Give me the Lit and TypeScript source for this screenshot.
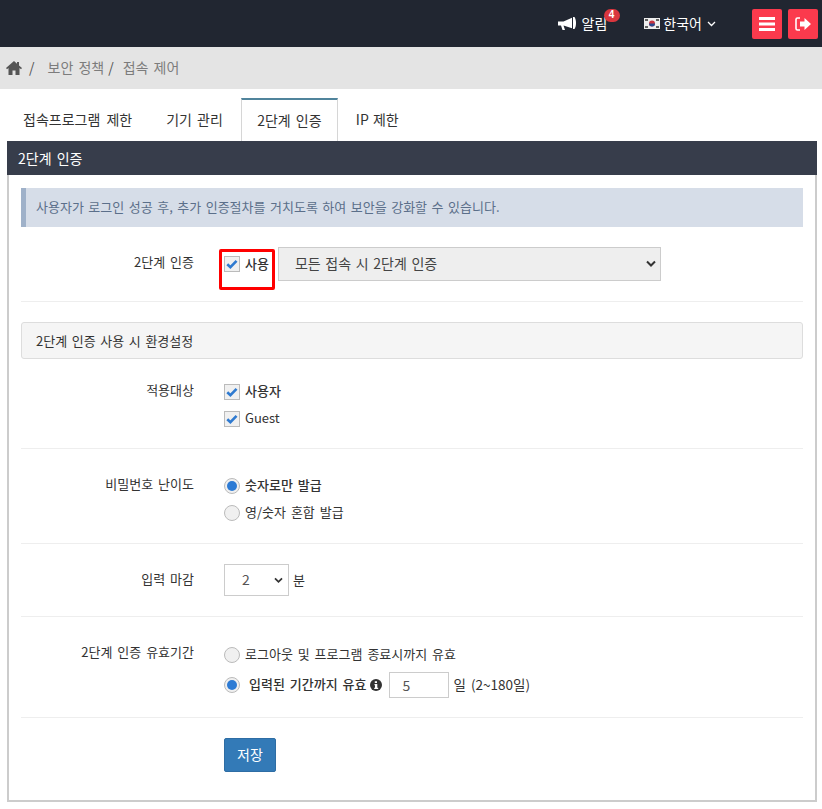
import { LitElement, html, css } from "lit";
import { customElement } from "lit/decorators.js";

const check = html`<svg class="chk" viewBox="0 0 16 16"><path d="M2.600 8.200 6.200 11.600 13.200 4.400" fill="none" stroke="#2f7ad0" stroke-width="3"/></svg>`;

@customElement("app-root")
export class AppRoot extends LitElement {
  static styles = css`
    :host { display: block; font-family: "Noto Sans CJK KR", "Noto Sans", sans-serif; font-size: 13px; word-spacing: 2px; color: #333; background: #fff; height: 809px; overflow: hidden; }
    * { box-sizing: border-box; }
    .top { height: 47px; background: #212631; display: flex; align-items: center; justify-content: flex-end; color: #fff; font-size: 14px; }
    .alarm { display: flex; align-items: center; position: relative; margin-right: 37px; }
    .alarm svg { margin-right: 6px; }
    .label-up { padding-bottom: 2px; }
    .badge { position: absolute; left: 46px; top: -4px; background: #d9363e; color: #fff; font: bold 10px/1 "Liberation Sans", sans-serif; width: 16px; height: 13px; border-radius: 7px; text-align: center; padding-top: 1px; }
    .lang { display: flex; align-items: center; gap: 3px; margin-right: 36px; }
    .flag { display: block; }
    .caret { margin-left: 2px; }
    .ibtn { width: 30px; height: 30px; background: #fb3a4d; border-radius: 2px; display: flex; align-items: center; justify-content: center; margin-right: 6px; }
    .ibtn:last-child { margin-right: 4px; }
    .crumb { height: 42px; background: #e4e4e4; display: flex; align-items: center; padding: 0 0 2px 6px; color: #7c7c7c; font-size: 14px; }
    .crumb svg { margin-top: 2px; }
    .crumb .sl { margin: 0 13px 0 7px; color: #555; }
    .crumb .sl2 { margin: 0 9px 0 4px; color: #555; }
    .tabs { display: flex; padding: 9px 0 0 7px; height: 52px; }
    .tab { height: 43px; padding: 0 17px 2px; font-size: 14px; display: flex; align-items: center; color: #333; }
    .tab.first { padding: 0 17px 2px 16px; word-spacing: 3px; }
    .tab.last { padding-left: 18px; word-spacing: 1px; }
    .tab.on { border: 1px solid #d6d6d6; border-top: 2px solid #50849c; border-bottom: 0; padding: 0 15px 2px; margin-left: 1px; width: 97px; justify-content: center; }
    .panel { margin: 0 5px 0 7px; border: 1px solid #ccc; border-width: 0 2px 2px 2px; height: 661px; }
    .ph { height: 34px; margin: 0 -2px; background: #373d4b; color: #fff; font-size: 14px; display: flex; align-items: center; padding-left: 11px; }
    .pb { padding: 13px 12px 0 12px; }
    .info { height: 39px; background: #d6dde8; border-left: 5px solid #9fb1c9; color: #5b6f8a; display: flex; align-items: center; padding: 0 0 2px 10px; font-size: 13px; word-spacing: 1.600px; }
    .row { display: grid; grid-template-columns: 173px 1fr; column-gap: 30px; border-bottom: 1px solid #eee; align-items: start; }
    .lbl { text-align: right; font-size: 13px; color: #333; }
    .r1 { height: 75px; padding-top: 20px; margin-bottom: 20px; }
    .r1 .lbl { padding-top: 5px; }
    .ctl { display: flex; align-items: center; }
    .mark { position: relative; height: 34px; }
    .hl { position: absolute; left: -5px; top: -2px; width: 56px; height: 41px; border: 3px solid #f00; border-radius: 2px; }
    .box { width: 16px; height: 16px; border: 1px solid #bbb; background: #f0f0f0; display: block; flex: none; }
    .chk { width: 14px; height: 14px; display: block; }
    .strong { font-weight: 500; }
    .cb { display: flex; align-items: center; gap: 5px; height: 27px; }
    .cb > span:not(.box):not(.rad) { padding-bottom: 2px; }
    .sel { height: 34px; border: 1px solid #ccc; background: #eee; color: #444; font-size: 14px; display: flex; align-items: center; justify-content: space-between; word-spacing: 1.500px; }
    .sel span { padding-bottom: 2px; }
    .wide { width: 383px; padding: 0 4px 0 16px; margin-left: 9px; }
    .section { height: 37px; border: 1px solid #ddd; border-radius: 3px; background: #f5f5f5; display: flex; align-items: center; padding-left: 14px; font-size: 13px; color: #333; margin-bottom: 19px; word-spacing: 1.700px; }
    .r2 { height: 71px; }
    .r2 .lbl { padding-top: 2px; }
    .r3 { height: 95px; padding-top: 23px; }
    .r3 .lbl { padding-top: 2px; }
    .r4 { height: 73px; padding-top: 20px; }
    .r4 .lbl { padding-top: 5px; }
    .mini { width: 65px; height: 32px; background: #fff; color: #555; padding: 0 5px 0 17px; }
    .mini svg { width: 9px; height: 7px; }
    .r5 { height: 101px; padding-top: 24px; }
    .r5 .lbl { padding-top: 1px; }
    .second { margin-top: 3px; }
    .rad { width: 16px; height: 16px; border-radius: 50%; border: 1px solid #bbb; background: #f0f0f0; display: flex; align-items: center; justify-content: center; flex: none; }
    .rad i { display: block; width: 10px; height: 10px; border-radius: 50%; background: #2d7bd4; }
    .gap-left { margin-left: 4px; }
    .info-i { margin-left: -2px; }
    .unit { margin-left: 4px; padding-bottom: 2px; }
    .inp { width: 60px; height: 26px; border: 1px solid #ccc; display: flex; align-items: center; padding-left: 13px; font-size: 14px; color: #555; margin: 0 0 0 2px; }
    .range { font-size: 13.500px; }
    .save { margin: 20px 0 0 203px; width: 52px; height: 34px; background: #337ab7; border: 1px solid #2e6da4; border-radius: 2px; color: #fff; font: 14px "Noto Sans CJK KR", sans-serif; padding: 0 0 2px; display: block; }
  `;

  private sel(t: string, cls: string) {
    return html`<div class="sel ${cls}"><span>${t}</span><svg width="10" height="8" viewBox="0 0 10 8"><path d="M1 1.500 5 5.500 9 1.500" fill="none" stroke="#333" stroke-width="2"/></svg></div>`;
  }
  private radio(on: boolean) {
    return html`<span class="rad">${on ? html`<i></i>` : ""}</span>`;
  }
  private box() {
    return html`<span class="box">${check}</span>`;
  }

  render() {
    return html`
      <div class="top">
        <div class="alarm">
          <svg width="18" height="14" viewBox="0 0 18 14"><path fill="#fff" d="M0 4.500h5.500L14 .8V11.200L5.500 8.500 7 13H4.500L3 8.500H0zM15 0h1.500c1 1.500 1.500 3.500 1.500 6s-.5 4.500-1.500 6H15z"/></svg>
          <span class="label-up">알림</span><span class="badge">4</span>
        </div>
        <div class="lang">
          <svg class="flag" width="16" height="11" viewBox="0 0 16 11"><rect width="16" height="11" fill="#eee"/><circle cx="8" cy="5.500" r="3" fill="#c9333f"/><path d="M5 5.500a3 3 0 0 0 6 0z" fill="#2a4a8f"/><path d="M1 2h3M1 9h3M12 2h3M12 9h3" stroke="#333" stroke-width="1.400"/></svg>
          <span class="label-up">한국어</span>
          <svg class="caret" width="9" height="6" viewBox="0 0 9 6"><path d="M1 1 4.500 4.500 8 1" fill="none" stroke="#fff" stroke-width="1.300"/></svg>
        </div>
        <div class="ibtn"><svg width="16" height="14" viewBox="0 0 16 14"><path fill="#fff" d="M0 0h16v3H0zM0 5.500h16v3H0zM0 11h16v3H0z"/></svg></div>
        <div class="ibtn"><svg width="16" height="14" viewBox="0 0 16 14"><path fill="none" stroke="#fff" stroke-width="1.600" d="M5 1H2.500A1.500 1.500 0 0 0 1 2.500v9A1.500 1.500 0 0 0 2.500 13H5"/><path fill="#fff" d="M5 4.500h4.500V1L16 7l-6.500 6V9.500H5z"/></svg></div>
      </div>
      <div class="crumb">
        <svg width="16" height="14" viewBox="0 0 16 14"><path fill="#555" d="M8 0 0 7l1 1.200L2.500 7v7h4V9.500h3V14h4V7L15 8.200 16 7l-3-2.600V1h-2v1.700z"/></svg>
        <span class="sl">/</span><span>보안 정책</span><span class="sl2">/</span><span>접속 제어</span>
      </div>
      <div class="tabs">
        <div class="tab first">접속프로그램 제한</div>
        <div class="tab">기기 관리</div>
        <div class="tab on">2단계 인증</div>
        <div class="tab last">IP 제한</div>
      </div>
      <div class="panel">
        <div class="ph">2단계 인증</div>
        <div class="pb">
          <div class="info">사용자가 로그인 성공 후, 추가 인증절차를 거치도록 하여 보안을 강화할 수 있습니다.</div>
          <div class="row r1">
            <div class="lbl">2단계 인증</div>
            <div class="ctl">
              <div class="mark cb">${this.box()}<span class="strong">사용</span><div class="hl"></div></div>
              ${this.sel("모든 접속 시 2단계 인증", "wide")}
            </div>
          </div>
          <div class="section">2단계 인증 사용 시 환경설정</div>
          <div class="row r2">
            <div class="lbl">적용대상</div>
            <div>
              <div class="cb">${this.box()}<span class="strong">사용자</span></div>
              <div class="cb">${this.box()}<span>Guest</span></div>
            </div>
          </div>
          <div class="row r3">
            <div class="lbl">비밀번호 난이도</div>
            <div>
              <div class="cb">${this.radio(true)}<span class="strong">숫자로만 발급</span></div>
              <div class="cb">${this.radio(false)}<span>영/숫자 혼합 발급</span></div>
            </div>
          </div>
          <div class="row r4">
            <div class="lbl">입력 마감</div>
            <div class="ctl">${this.sel("2", "mini")}<span class="unit">분</span></div>
          </div>
          <div class="row r5">
            <div class="lbl">2단계 인증 유효기간</div>
            <div>
              <div class="cb">${this.radio(false)}<span>로그아웃 및 프로그램 종료시까지 유효</span></div>
              <div class="cb second">${this.radio(true)}<span class="strong gap-left">입력된 기간까지 유효</span>
                <svg class="info-i" width="12" height="12" viewBox="0 0 12 12"><circle cx="6" cy="6" r="6" fill="#333"/><path d="M4.800 2.200h2.200v1.800H4.800zM4.500 5h2.800v3.800h.9V10H4.200V8.800H5V6.200h-.5z" fill="#fff"/></svg>
                <div class="inp">5</div><span class="range">일 (2~180일)</span></div>
            </div>
          </div>
          <button class="save">저장</button>
        </div>
      </div>
    `;
  }
}
